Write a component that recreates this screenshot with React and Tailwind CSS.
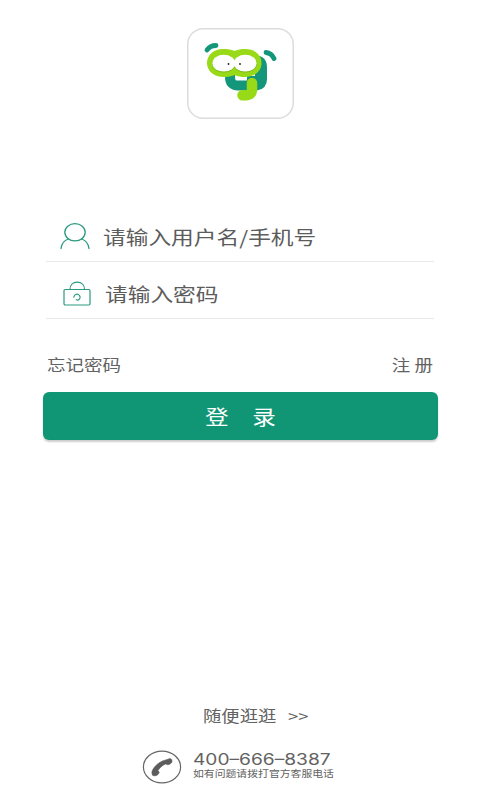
import { useState } from 'react'

function Logo() {
  return (
    <svg viewBox="0 0 107 91" className="w-[107px] h-[91px] shrink-0" fill="none">
      <rect x="0.75" y="0.75" width="105.5" height="89.5" rx="15.5" fill="#fff" stroke="#dcdcdc" strokeWidth="1.5" />
      {/* ears */}
      <path d="M20 22 Q23 17.5 29 17.5" stroke="#14967a" strokeWidth="4.8" strokeLinecap="round" />
      <path d="M79 24.5 Q84.5 25 87 30.5" stroke="#14967a" strokeWidth="4.8" strokeLinecap="round" />
      {/* body */}
      <path d="M43 42 V49 Q43 57.5 51 57.5 H62" stroke="#14967a" strokeWidth="10" />
      <path d="M68 27 Q80 28 80 39 V51 Q80 61 70 62.5 H60 V48 H68 Z" fill="#14967a" />
      <path d="M65 55 V61 Q65 67.2 59 67.2 H55.5" stroke="#98da18" strokeWidth="10.5" strokeLinecap="round" />
      {/* glasses */}
      <path d="M36 21 C41 21 44 21.5 47.5 23 C51 21.5 54 21 58 21 C68 21 74.5 27 74.5 35 C74.5 43 68 49 58 49 C54 49 51 48.5 47.5 47 C44 48.5 41 49 37 49 C27 49 20 43 20 35 C20 27 27 21 36 21 Z" fill="#98da18" />
      <ellipse cx="36.8" cy="36" rx="11.8" ry="8.6" fill="#7bbd18" />
      <ellipse cx="58.2" cy="36" rx="11.8" ry="8.6" fill="#7bbd18" />
      <ellipse cx="36.8" cy="35.2" rx="11.4" ry="8.4" fill="#fff" />
      <ellipse cx="58.2" cy="35.2" rx="11.4" ry="8.4" fill="#fff" />
      <circle cx="41.5" cy="36" r="0.9" fill="#222" />
      <circle cx="53" cy="36" r="0.9" fill="#222" />
    </svg>
  )
}

function UserIcon() {
  return (
    <svg viewBox="0 0 30 27" className="w-[30px] h-[27px] shrink-0" fill="none" stroke="#2a9a80" strokeWidth="1.3" strokeLinecap="round">
      <ellipse cx="15" cy="9.3" rx="10.2" ry="8.6" />
      <path d="M1 25.5 C1.5 21 4.5 17.3 8.5 16 M21.5 16 C25.5 17.3 28.5 21 29 25.5" />
    </svg>
  )
}

function LockIcon() {
  return (
    <svg viewBox="0 0 28 25" className="w-7 h-[25px] shrink-0" fill="none" stroke="#2a9a80" strokeWidth="1.2" strokeLinecap="round">
      <rect x="1" y="8.5" width="26" height="15.5" rx="1.2" />
      <path d="M7 8.5 C7 4 10 1.2 14.2 1.2 C18.5 1.2 21.5 4 21.5 8.5" />
      <path d="M10.8 16.2 C11.3 13.4 13.7 12.8 15.3 13.5 C17.5 14.6 17.6 17.2 16 18.5 C15.2 19.2 14 19.2 13.3 18.6" />
    </svg>
  )
}

function PhoneIcon() {
  return (
    <svg viewBox="0 0 40 34" className="w-10 h-[34px] shrink-0" fill="none">
      <ellipse cx="20" cy="17" rx="18.6" ry="15.9" stroke="#666" strokeWidth="1.2" />
      <path d="M23 10.2 L28 8.5 Q30.5 9 30 12 Q28.5 14.5 26 14.8 L23.5 14 C20 15.5 17.5 18 16 20.5 L17.3 22.5 Q16.5 25.2 13 25.9 L10.5 25.3 Q9.3 22.5 10.3 20.5 C12.5 16 17.5 11.5 23 10.2 Z" fill="#5c5c5c" stroke="#5c5c5c" strokeWidth="0.6" strokeLinejoin="round" />
    </svg>
  )
}

const inputClass = 'w-[230px] h-8 bg-transparent text-[19px] text-[#5c5c5c] placeholder:text-[#5c5c5c] outline-none origin-left scale-x-[1.195]'

export default function App() {
  const [username, setUsername] = useState('')
  const [password, setPassword] = useState('')

  return (
    <div className="w-[480px] h-[800px] bg-white flex flex-col overflow-hidden text-[#626262] font-['Noto_Sans_CJK_SC',sans-serif]">
      {/* Logo */}
      <div className="flex justify-center pt-7">
        <Logo />
      </div>

      {/* Form */}
      <form onSubmit={e => e.preventDefault()} className="mt-[93px]">
        <div className="mx-[46px] h-[50px] flex items-center border-b border-[#e9e9e9] pl-3.5 gap-[13px]">
          <UserIcon />
          <input
            value={username}
            onChange={e => setUsername(e.target.value)}
            placeholder="请输入用户名/手机号"
            className={inputClass}
          />
        </div>
        <div className="mx-[46px] h-[57px] flex items-center border-b border-[#e9e9e9] pt-1.5 pl-[17px] gap-[14px]">
          <LockIcon />
          <input
            type="password"
            value={password}
            onChange={e => setPassword(e.target.value)}
            placeholder="请输入密码"
            className={inputClass}
          />
        </div>

        <div className="flex justify-between mx-[47px] mt-[34px] h-6 text-[15.7px] leading-6">
          <a className="origin-left scale-x-[1.18]">忘记密码</a>
          <a className="origin-right scale-x-[1.18]">注 册</a>
        </div>

        <button
          type="submit"
          className="block mx-[42.5px] mt-[14.5px] w-[395px] h-12 rounded-[6px] bg-[#119675] text-white text-[20px] shadow-[0_2px_2px_rgba(0,0,0,0.2)]"
        >
          <span className="flex justify-center gap-5 pt-0.5 scale-x-[1.18]">
            <span>登</span>
            <span>录</span>
          </span>
        </button>
      </form>

      {/* Footer */}
      <div className="mt-auto">
        <a className="flex ml-[203px] h-6 gap-[10px] text-[15.7px] leading-6 origin-left scale-x-[1.17]">
          <span>随便逛逛</span>
          <span>&gt;&gt;</span>
        </a>
        <div className="flex ml-[142px] mt-[22px] mb-4 gap-[11px]">
          <PhoneIcon />
          <div className="pt-0.5 whitespace-nowrap">
            <div className="w-[115px] h-[15px] leading-4 text-[15.5px] origin-left scale-x-[1.235] font-['Inter',sans-serif]">400–666–8387</div>
            <div className="w-[120px] h-3 leading-3 text-[9.2px] origin-left scale-x-[1.18]">如有问题请拨打官方客服电话</div>
          </div>
        </div>
      </div>
    </div>
  )
}
